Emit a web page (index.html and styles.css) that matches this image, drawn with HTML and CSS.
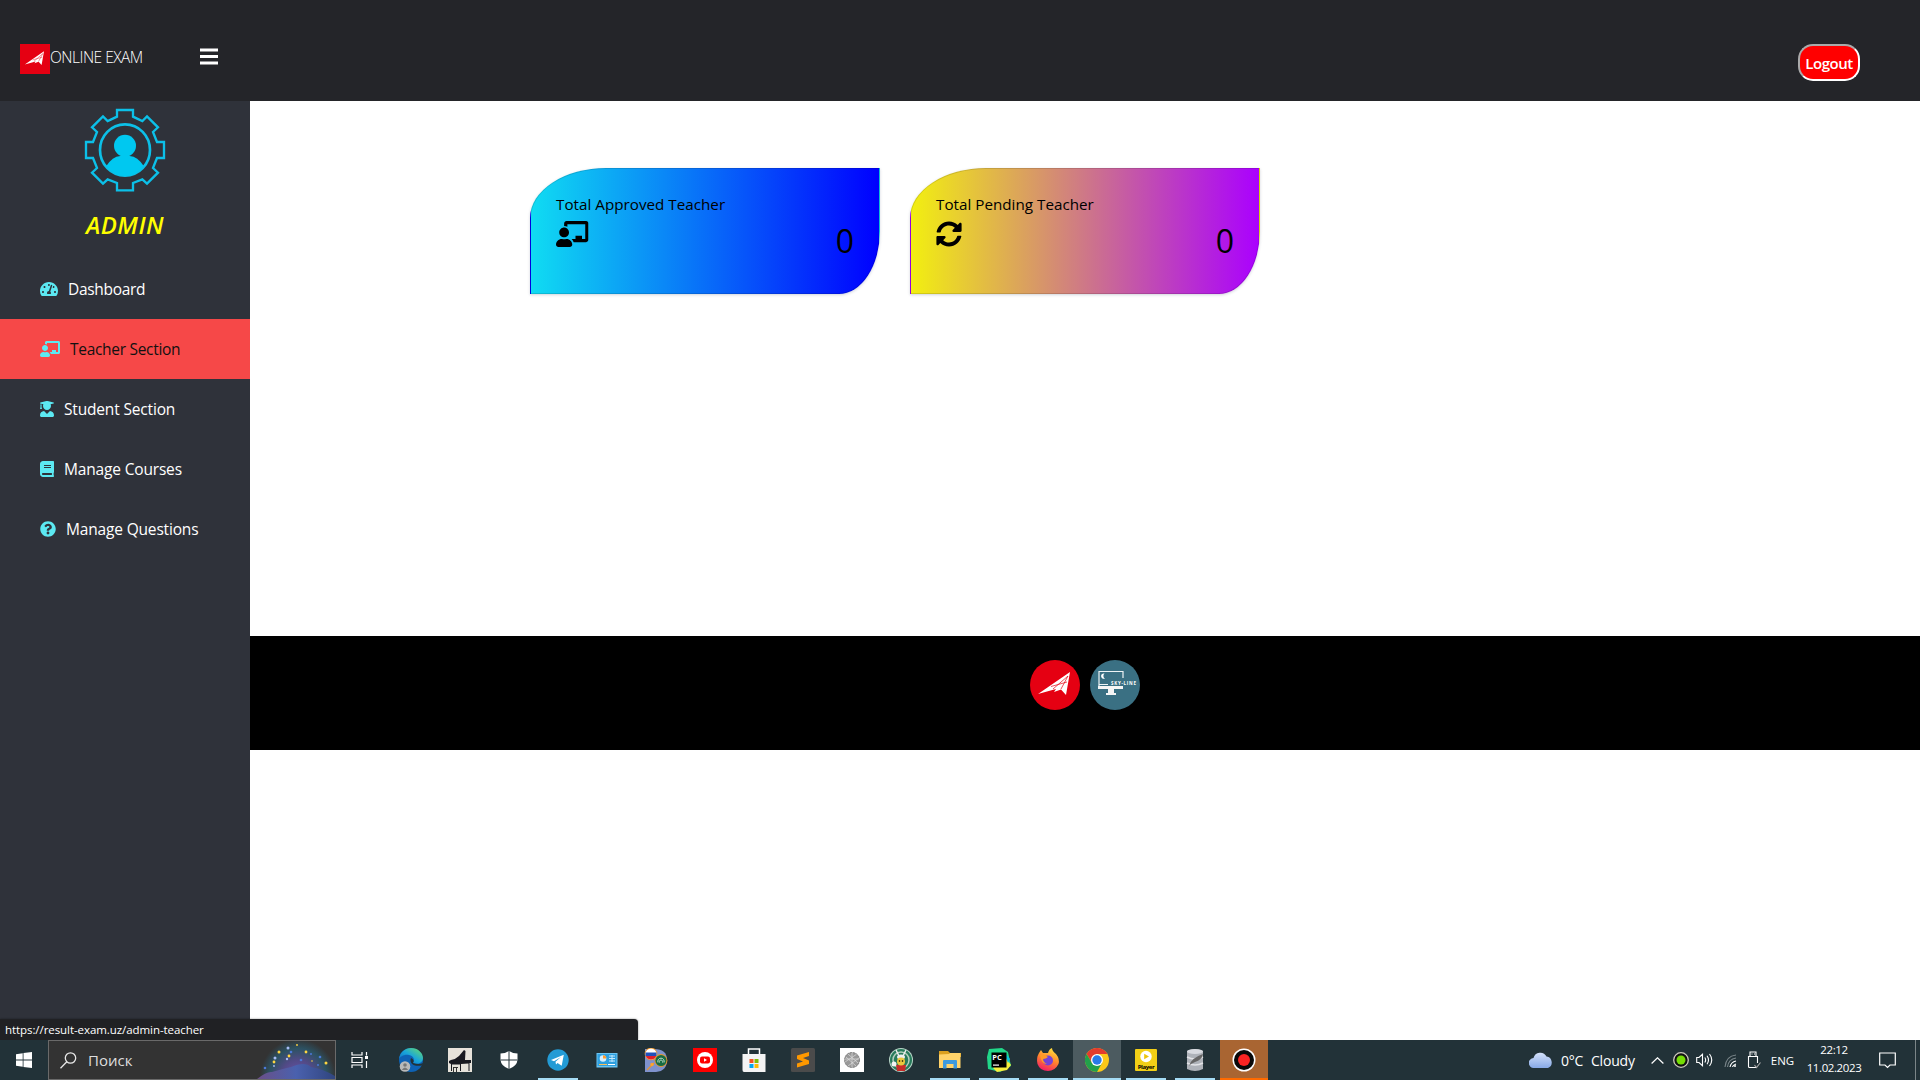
FILE: index.html
```
<!DOCTYPE html>
<html lang="en">
<head>
<meta charset="utf-8">
<title>Online Exam</title>
<link rel="stylesheet" href="styles.css">
</head>
<body>
<svg class="defs" aria-hidden="true">
  <symbol id="teacher" viewBox="0 0 640 512"><path d="M208 352c-2.39 0-4.78.35-7.06 1.09C187.98 357.3 174.35 360 160 360c-14.35 0-27.98-2.7-40.95-6.91-2.28-.74-4.66-1.09-7.05-1.09C49.94 352-.33 402.48 0 464.62.14 490.88 21.73 512 48 512h224c26.27 0 47.86-21.12 48-47.38.33-62.14-49.94-112.62-112-112.62zm-48-32c53.02 0 96-42.98 96-96s-42.98-96-96-96-96 42.98-96 96 42.98 96 96 96zM592 0H208c-26.47 0-48 22.25-48 49.59V96c23.42 0 45.1 6.78 64 17.8V64h352v288h-64v-64H384v64h-76.24c19.1 16.69 33.12 38.73 39.69 64H592c26.47 0 48-22.25 48-49.59V49.59C640 22.25 618.47 0 592 0z"/></symbol>
  <symbol id="plane" viewBox="0 0 50 50"><path fill="#fff" d="M8 34 40 12 36 35 31 29.500 24 32 26 29z"/><path d="M23 29 38 16 31 29M21 26.500 37 22" stroke="#e50012" stroke-width=".7" fill="none"/></symbol>
</svg>

<header class="topbar">
  <a class="brand"><svg class="brand-logo" viewBox="0 0 50 50"><use href="#plane"/></svg><span>ONLINE EXAM</span></a>
  <svg class="burger" viewBox="0 0 18 17"><path fill="#fff" d="M0 .6h18v3H0zM0 7h18v3H0zM0 13.4h18v3H0z"/></svg>
  <button class="logout">Logout</button>
</header>

<div class="page">
  <aside class="sidebar">
    <svg class="avatar" viewBox="252 324 246 252">
      <path fill="none" stroke="#0cc0e8" stroke-width="7" d="M351 330H399V350L427 363 441 349 474 382 459 396 471 426H492V474H471L459 504 474 518 441 551 427 538 399 549V571H351V549L323 538 309 551 276 518 291 504 279 474H258V426H279L291 396 276 382 309 349 323 363 351 350Z"/>
      <ellipse cx="375" cy="450" rx="75" ry="77" fill="none" stroke="#0cc0e8" stroke-width="8"/>
      <circle cx="375" cy="437" r="33" fill="#00c8f0"/>
      <path fill="#00c8f0" d="M319 498Q337 470 361 468H389Q413 470 431 498Q409 528 375 528T319 498Z"/>
    </svg>
    <h4 class="role">ADMIN</h4>
    <nav class="menu">
      <a class="item dash"><svg class="w18" viewBox="0 0 576 512"><path d="M288 32C128.94 32 0 160.94 0 320c0 52.8 14.25 102.26 39.06 144.8 5.61 9.62 16.3 15.2 27.44 15.2h443c11.14 0 21.83-5.58 27.44-15.2C561.75 422.26 576 372.8 576 320c0-159.06-128.94-288-288-288zm0 64c14.71 0 26.58 10.13 30.32 23.65-1.11 2.26-2.64 4.23-3.45 6.67l-9.22 27.67c-5.13 3.49-10.97 6.01-17.64 6.01-17.67 0-32-14.33-32-32S270.33 96 288 96zM96 384c-17.67 0-32-14.33-32-32s14.33-32 32-32 32 14.33 32 32-14.33 32-32 32zm48-160c-17.67 0-32-14.33-32-32s14.33-32 32-32 32 14.33 32 32-14.33 32-32 32zm246.77-72.41l-61.33 184C343.13 347.33 352 364.54 352 384c0 11.72-3.38 22.55-8.88 32H232.88c-5.5-9.45-8.88-20.28-8.88-32 0-33.94 26.5-61.43 59.9-63.59l61.34-184.01c4.17-12.56 17.73-19.45 30.36-15.17 12.57 4.19 19.35 17.79 15.17 30.36zm14.66 57.2l15.52-46.55c3.47-1.29 7.13-2.23 11.05-2.23 17.67 0 32 14.33 32 32s-14.33 32-32 32c-11.38-.01-20.89-6.28-26.57-15.22zM480 384c-17.67 0-32-14.33-32-32s14.33-32 32-32 32 14.33 32 32-14.33 32-32 32z"/></svg><span>Dashboard</span></a>
      <a class="item active"><svg class="w20"><use href="#teacher"/></svg><span>Teacher Section</span></a>
      <a class="item"><svg class="w14" viewBox="0 0 448 512"><path d="M319.4 320.6L224 416l-95.4-95.4C57.1 323.7 0 382.2 0 454.4v9.6c0 26.5 21.5 48 48 48h352c26.5 0 48-21.5 48-48v-9.6c0-72.2-57.1-130.7-128.6-133.8zM13.6 79.8l6.4 1.5v58.4c-7 4.2-12 11.5-12 20.3 0 8.4 4.6 15.4 11.1 19.7L3.5 242c-1.7 6.9 2.1 14 7.6 14h41.8c5.5 0 9.3-7.1 7.6-14l-15.6-62.3C51.4 175.4 56 168.4 56 160c0-8.8-5-16.1-12-20.3V87.1l66 15.9c-8.6 17.2-14 36.4-14 57 0 70.7 57.3 128 128 128s128-57.3 128-128c0-20.6-5.3-39.8-14-57l96.3-23.2c18.2-4.4 18.2-27.1 0-31.5l-190.4-46c-13-3.1-26.7-3.1-39.7 0L13.6 48.2c-18.1 4.4-18.1 27.2 0 31.6z"/></svg><span>Student Section</span></a>
      <a class="item"><svg class="w14" viewBox="0 0 448 512"><path d="M448 360V24c0-13.3-10.7-24-24-24H96C43 0 0 43 0 96v320c0 53 43 96 96 96h328c13.3 0 24-10.7 24-24v-16c0-7.5-3.5-14.3-8.9-18.7-4.2-15.4-4.2-59.3 0-74.7 5.4-4.3 8.9-11.1 8.9-18.6zM128 134c0-3.3 2.7-6 6-6h212c3.3 0 6 2.7 6 6v20c0 3.3-2.7 6-6 6H134c-3.3 0-6-2.7-6-6v-20zm0 64c0-3.3 2.7-6 6-6h212c3.3 0 6 2.7 6 6v20c0 3.3-2.7 6-6 6H134c-3.3 0-6-2.7-6-6v-20zm253.4 250H96c-17.7 0-32-14.3-32-32 0-17.6 14.4-32 32-32h285.4c-1.9 17.1-1.9 46.9 0 64z"/></svg><span>Manage Courses</span></a>
      <a class="item"><svg class="w16" viewBox="0 0 512 512"><path d="M504 256c0 136.997-111.043 248-248 248S8 392.997 8 256C8 119.083 119.043 8 256 8s248 111.083 248 248zM262.655 90c-54.497 0-89.255 22.957-116.549 63.758-3.536 5.286-2.353 12.415 2.715 16.258l34.699 26.31c5.205 3.947 12.621 3.008 16.665-2.122 17.864-22.658 30.113-35.797 57.303-35.797 20.429 0 45.698 13.148 45.698 32.958 0 14.976-12.363 22.667-32.534 33.976C247.128 238.528 216 254.941 216 296v4c0 6.627 5.373 12 12 12h56c6.627 0 12-5.373 12-12v-1.333c0-28.462 83.186-29.647 83.186-106.667 0-58.002-60.165-102-116.531-102zM256 338c-25.365 0-46 20.635-46 46 0 25.364 20.635 46 46 46s46-20.636 46-46c0-25.365-20.635-46-46-46z"/></svg><span>Manage Questions</span></a>
    </nav>
  </aside>

  <main class="content">
    <section class="cards">
      <article class="card approved">
        <h6>Total Approved Teacher</h6>
        <div class="card-row"><svg class="card-icon"><use href="#teacher"/></svg><span class="count">0</span></div>
      </article>
      <article class="card pending">
        <h6>Total Pending Teacher</h6>
        <div class="card-row"><svg class="card-icon sq" viewBox="0 0 512 512"><path d="M370.72 133.28C339.458 104.008 298.888 87.962 255.848 88c-77.458.068-144.328 53.178-162.791 126.85-1.344 5.363-6.122 9.15-11.651 9.15H24.103c-7.498 0-13.194-6.807-11.807-14.176C33.933 94.924 134.813 8 256 8c66.448 0 126.791 26.136 171.315 68.685L463.03 40.97C478.149 25.851 504 36.559 504 57.941V192c0 13.255-10.745 24-24 24H345.941c-21.382 0-32.09-25.851-16.971-40.971l41.75-41.749zM32 296h134.059c21.382 0 32.09 25.851 16.971 40.971l-41.75 41.75c31.262 29.273 71.835 45.319 114.876 45.28 77.418-.07 144.315-53.144 162.787-126.849 1.344-5.363 6.122-9.15 11.651-9.15h57.304c7.498 0 13.194 6.807 11.807 14.176C478.067 417.076 377.187 504 256 504c-66.448 0-126.791-26.136-171.315-68.685L48.97 471.03C33.851 486.149 8 475.441 8 454.059V320c0-13.255 10.745-24 24-24z"/></svg><span class="count">0</span></div>
      </article>
    </section>
    <footer class="footer">
      <svg class="social red" viewBox="0 0 50 50"><use href="#plane"/></svg>
      <svg class="social teal" viewBox="0 0 50 50">
        <path d="M9 26V11.500H33V18M9 22V24.500H18" fill="none" stroke="#eef4f6" stroke-width="1.200"/>
        <path d="M14.500 13.500A2.700 2.700 0 1 0 15 18.500A3 3 0 0 1 14.500 13.500Z" fill="#fff"/>
        <path d="M8 26H33V29H8zM18 29H24V33H26V35H16V33H18z" fill="#f5f5f5"/>
        <text x="21" y="25" class="sky" textLength="25">SKY-LINE</text>
      </svg>
    </footer>
  </main>
  <div class="status">https://result-exam.uz/admin-teacher</div>
</div>

<div class="taskbar">
  <div class="start"><svg width="16" height="16" viewBox="0 0 16 16"><path fill="#fff" d="M0 2.200 6.700 1.300V7.500H0zM7.500 1.100 16 0V7.500H7.500zM0 8.400H6.700V14.700L0 13.800zM7.500 8.400H16V16L7.500 14.900z"/></svg></div>
  <div class="search">
    <svg width="17" height="17" viewBox="0 0 17 17" fill="none" stroke="#e8e8e8" stroke-width="1.300"><circle cx="10.500" cy="6" r="5.200"/><path d="M6.800 9.800.5 16.200"/></svg>
    <span>Поиск</span>
    <svg class="galaxy" width="78" height="38" viewBox="0 0 78 38">
      <defs><radialGradient id="glow" gradientUnits="userSpaceOnUse" cx="41" cy="36" r="38"><stop offset="0" stop-color="#6c55b0"/><stop offset=".45" stop-color="#514a86"/><stop offset=".75" stop-color="#2c5263"/><stop offset="1" stop-color="#333"/></radialGradient>
      <linearGradient id="hill" x1="0" x2="1"><stop offset="0" stop-color="#6a4f87"/><stop offset=".5" stop-color="#4a61ae"/><stop offset="1" stop-color="#30457f"/></linearGradient></defs>
      <path fill="url(#glow)" d="M0 0H78V38H0z"/>
      <path fill="url(#hill)" d="M0 38Q10 30 15 31 25 28 34 26 48 20 54 26 66 28 78 35V38z"/>
      <g fill="#ffd640"><circle cx="22" cy="11" r="1.500"/><circle cx="32" cy="15" r="1.400"/><circle cx="49" cy="11" r="1.400"/><circle cx="17" cy="21" r="1.400"/><circle cx="69" cy="22" r="1.500"/><circle cx="40" cy="4" r=".9"/><circle cx="55" cy="20" r=".8"/></g>
      <g fill="#a9bdf5"><circle cx="31" cy="7" r="1.500"/><circle cx="18" cy="17" r="1.500"/><circle cx="30" cy="18" r="1.200"/><circle cx="17" cy="25" r=".9"/></g>
      <g fill="#4b79d8"><circle cx="8" cy="27" r="1.300"/><circle cx="34" cy="11" r="1.300"/><circle cx="44" cy="19" r="1.300"/><circle cx="63" cy="16" r="1.300"/><circle cx="54" cy="13" r="1"/><circle cx="61" cy="24" r="1"/></g>
    </svg>
  </div>
  <div class="cell taskview"><svg viewBox="0 0 24 24" fill="none" stroke="#fff" stroke-width="1.200"><path d="M4 4V7H14V4M4 20V17H14V20M4 9.500H14V14.500H4zM18.500 4V7.500M18.500 13V20"/><path fill="#fff" stroke="none" d="M17 8h3v3h-3z"/></svg></div>
  <div class="apps">
    <div class="cell"><svg viewBox="0 0 24 24"><defs><linearGradient id="edge" x1="0" y1="1" x2="1" y2="0"><stop offset="0" stop-color="#0c62bd"/><stop offset=".5" stop-color="#19a5da"/><stop offset="1" stop-color="#6ce066"/></linearGradient></defs><circle cx="12" cy="12" r="12" fill="#0e62b5"/><path fill="url(#edge)" d="M0 11C1 4 6 0 12 0 19 0 24 5 24 10 24 15 18 17 14 15 16 12 15 8 10 7 5 6 1 9 0 11Z"/><path fill="#223238" d="M12 10C10 15 14 19 23 17.500L24 15Q20 17 14 15 16 12 12 10Z"/><circle cx="6" cy="18.500" r="5.300" fill="#b9b9b9"/><circle cx="6" cy="17" r="1.800" fill="#777"/><path d="M2.800 22Q6 17 9.200 22z" fill="#777"/></svg></div>
    <div class="cell"><svg viewBox="0 0 24 24"><path fill="#e6e2da" d="M0 0h24v24H0z"/><path fill="#191920" d="M3 12Q8 11 11 8L16 2 17.500 3 17 12H23V15H21.500V23H20.500V15.500L13 16V23H12V16.500L4 16.500V23H3V16L1 15V13z"/><path fill="#333" d="M5 19h5v1H9v4H8v-4H6v4H5z"/></svg></div>
    <div class="cell"><svg viewBox="0 0 24 24"><path fill="#fff" d="M12 3Q16 5.500 20.500 5.500V12Q20 18 12 21Q4 18 3.500 12V5.500Q8 5.500 12 3Z"/><path d="M12 3V21M3.500 12H20.500" stroke="#223238" stroke-width="1"/></svg></div>
    <div class="cell run"><svg viewBox="0 0 24 24"><circle cx="12" cy="12" r="10.700" fill="#239bd5"/><path fill="#fff" d="M5 12 17.800 6.700 15.700 17.800 11.500 15 10 16.500 9.500 13.800 15 9 8 13.200z"/></svg></div>
    <div class="cell"><svg viewBox="0 0 24 24"><rect x="1.500" y="5" width="21" height="14.500" fill="#6cc5f2"/><path fill="#2d9fdf" d="M2.500 6h19v12h-19z"/><circle cx="8" cy="10.500" r="3.300" fill="#d5efff"/><path d="M8 10.500V7.200A3.300 3.300 0 0 1 11.300 10.500z" fill="#ff9a2e"/><path d="M14 8h6M14 10.500h6M14 13h6M17 7v7" stroke="#c5eaff"/><path d="M4 16.500h8" stroke="#ffbf55"/><path d="M13 16.500h7" stroke="#fff"/></svg></div>
    <div class="cell"><svg viewBox="0 0 24 24"><path fill="#7f92cd" d="M1 1H10Q23 1 23 12T12 24H1z"/><circle cx="7" cy="6" r="6.300" fill="#e9942b"/><circle cx="7" cy="6" r="5.500" fill="#fff"/><path fill="#2050bb" d="M1.500 4.500h11v3.500h-11z"/><path fill="#e01e2b" d="M1.700 8h10.600Q10.500 11.500 7 11.500 3.500 11.500 1.700 8z"/><circle cx="17" cy="12.500" r="6.400" fill="#e9942b"/><circle cx="17" cy="12.500" r="5.500" fill="#176b45"/><path d="M14 14.500A3.200 3.200 0 1 1 20 14.500M15.500 14.500A1.700 1.700 0 1 1 18.500 14.500" fill="none" stroke="#cfe5d5" stroke-width=".9"/><path d="M3 22 10 15" stroke="#e9942b" stroke-width="1.300"/><circle cx="8" cy="16.500" r="1.700" fill="#ffa42c"/></svg></div>
    <div class="cell"><svg viewBox="0 0 24 24"><path fill="#f00" d="M0 0h24v24H0z"/><circle cx="12" cy="12" r="8" fill="#fff"/><rect x="7" y="8.500" width="10" height="7" rx="2" fill="#f00"/><path fill="#fff" d="M11 10.300v3.400l3-1.700z"/></svg></div>
    <div class="cell"><svg viewBox="0 0 24 24"><path fill="none" stroke="#fff" stroke-width="1.500" d="M6.500 7V1H17.500V7"/><path fill="#f4f4f4" d="M.5 6h23v18H2Q.5 24 .5 22z"/><path fill="#f35325" d="M7.500 11h4v4h-4z"/><path fill="#81bc06" d="M12.500 11h4v4h-4z"/><path fill="#05a6f0" d="M7.500 16h4v4h-4z"/><path fill="#ffba08" d="M12.500 16h4v4h-4z"/></svg></div>
    <div class="cell"><svg viewBox="0 0 24 24"><rect width="24" height="24" rx="1.500" fill="#4b4b4b"/><path fill="#ff9800" d="M6 7.500 18 4V8L12 10 18 12.500V16L6 19.500V15.500L12 13.500 6 11z"/></svg></div>
    <div class="cell"><svg viewBox="0 0 24 24"><path fill="#fff" d="M0 0h24v24H0z"/><circle cx="12" cy="12" r="7.700" fill="#999"/><path d="M6 9l10 9M8 6l10 9M12 4v16M5 14l12-8M8 18l11-8M4 11h16" stroke="#dedede" stroke-width=".7"/><circle cx="12" cy="12" r="7.500" fill="none" stroke="#777" stroke-width=".8" stroke-dasharray="2 1"/></svg></div>
    <div class="cell"><svg viewBox="0 0 24 24"><circle cx="12" cy="12" r="12" fill="#b8d6c8"/><circle cx="12" cy="12" r="11" fill="#287b5b"/><circle cx="12" cy="12" r="8" fill="none" stroke="#b5cfbf" stroke-width="1.500"/><path d="M7 2 10 8M17 2 14 8" stroke="#eee" stroke-width="1.500"/><ellipse cx="12" cy="9" rx="4" ry="2.500" fill="#eee"/><path fill="#c62c29" d="M7 17h10l-1 6H8z"/><circle cx="12" cy="13.500" r="4" fill="#eac83d"/><circle cx="10.500" cy="13" r=".8"/><circle cx="13.500" cy="13" r=".8"/><circle cx="5" cy="16" r="2.500" fill="#f4f4f4"/></svg></div>
    <div class="cell run"><svg viewBox="0 0 24 24"><path fill="#dba01f" d="M1 3h9l2 2h11v4H1z"/><path fill="#ffd36a" d="M1 6.500 11 6 12 5H22.500V20H1z"/><path fill="#3c9ade" d="M5 20.500V13Q5 12 6 12H18Q19 12 19 13V20.500H15.500V16H8.500V20.500z"/></svg></div>
    <div class="cell run"><svg viewBox="0 0 24 24"><path fill="#21d789" d="M2 1 15 0 21 4 24 18 13 24 1 21 0 9z"/><path fill="#f6ed3b" d="M19 10 24 17 20 22 10 24 6 20z"/><path fill="#0bc2e0" d="M17 4 23 11 21 15z"/><path d="M4.500 4.500h15v15h-15z"/><text x="5.300" y="12" class="pc">PC</text><path fill="#fff" d="M6 16.500h6v1.200H6z"/></svg></div>
    <div class="cell run"><svg viewBox="0 0 24 24"><defs><linearGradient id="ff" x1=".7" y1="0" x2=".3" y2="1"><stop offset="0" stop-color="#ffe13c"/><stop offset=".5" stop-color="#ff832d"/><stop offset="1" stop-color="#f3186a"/></linearGradient></defs><path fill="url(#ff)" d="M3 5 5 2 7 5 12 5Q13 1 16 0 16 3 20 6 24 11 22.500 16 19 23 12 23 4 23 1.500 16 0 10 3 5z"/><circle cx="12" cy="12.500" r="5" fill="#7542d6"/><path fill="#ff9a25" d="M4 7Q9 6 12 9 10 11 7 11 7 14 11 16 5 16 4 7z"/></svg></div>
    <div class="cell run current"><svg viewBox="0 0 24 24"><circle cx="12" cy="12" r="12" fill="#fbc818"/><path fill="#e33b2e" d="M1.600 6A12 12 0 0 1 22.400 6H12L7 15z"/><path fill="#22a04b" d="M1.600 6A12 12 0 0 0 12 24L17 15 7 15z"/><circle cx="12" cy="12" r="6" fill="#fff"/><circle cx="12" cy="12" r="4.700" fill="#287ae8"/></svg></div>
    <div class="cell run"><svg viewBox="0 0 24 24"><rect x="1" y="1" width="22" height="22" rx="1" fill="#f2cf16"/><circle cx="12" cy="8.500" r="5.700" fill="#fff"/><path fill="#edc50b" d="M10.200 5.800v5.400L15 8.500z"/><text x="3.700" y="21" class="player" textLength="17">Player</text></svg></div>
    <div class="cell run"><svg viewBox="0 0 24 24"><path fill="#aeb2b9" d="M4 3Q12-1 20 3V21Q12 25 4 21z"/><ellipse cx="12" cy="3.500" rx="8" ry="2.500" fill="#d8dae0"/><path d="M4 9Q12 13 20 9M4 15Q12 19 20 15" fill="none" stroke="#e2e3e7" stroke-width="1.500"/><path fill="#666" d="M6 18Q8 10 20 6 19 12 12 14L8 16z"/></svg></div>
    <div class="cell record"><svg viewBox="0 0 24 24"><circle cx="12" cy="12" r="11.500" fill="#fff"/><circle cx="12" cy="12" r="10" fill="#090909"/><circle cx="12" cy="12" r="6" fill="#fa2323"/></svg></div>
  </div>
  <div class="tray">
    <div class="weather"><svg width="24" height="16" viewBox="0 0 24 16"><defs><linearGradient id="cloud" x2="0" y2="1"><stop offset="0" stop-color="#d4e1fa"/><stop offset="1" stop-color="#87a9e6"/></linearGradient></defs><path fill="url(#cloud)" d="M5 16A5 5 0 0 1 4.500 6 7 7 0 0 1 17.500 4.500 6 6 0 0 1 19 16z"/></svg><span class="temp">0°C</span><span class="sky-state">Cloudy</span></div>
    <div class="t24"><svg width="13" height="7" viewBox="0 0 13 7"><path d="M.6 6.500 6.500.8 12.400 6.500" fill="none" stroke="#fff" stroke-width="1.200"/></svg></div>
    <div class="t24"><svg width="16" height="16" viewBox="0 0 16 16"><circle cx="8" cy="8" r="7.300" fill="#111" stroke="#cfcabf" stroke-width="1.300"/><circle cx="8" cy="8" r="4.500" fill="#75dd05"/></svg></div>
    <div class="t24"><svg width="18" height="14" viewBox="0 0 18 14" fill="none" stroke="#fff" stroke-width="1.100"><path d="M.7 4.500H3L6.500 1.300V12.700L3 9.500H.7zM8.800 4.500Q10.500 7 8.800 9.500M11 2.800Q14 7 11 11.200M13.500 1Q18 7 13.500 13"/></svg></div>
    <div class="t24 wifi"><svg width="13" height="13" viewBox="0 0 13 13" fill="none" stroke="#aab4b7" stroke-width="1.100"><path d="M1 13Q2 2 12 1M3.500 13Q4.500 5 12 4" opacity=".65"/><path d="M6 13Q7 8 12 7M8.500 13Q9 11 12 10" stroke="#fff"/><circle cx="11" cy="12" r="1" fill="#fff" stroke="none"/></svg></div>
    <div class="t24"><svg width="14" height="18" viewBox="0 0 14 18" fill="none" stroke="#fff" stroke-width="1.100"><path d="M3 5.500V1H9V5.500M9 16.500H2.500Q1.500 16.500 1.500 15.500V5.500H10.500V12M4.500 3H5.500M7 3H8"/><path d="M7.500 14 9.500 16.500 13.500 11.500" stroke="#aaa"/></svg></div>
    <div class="lang">ENG</div>
    <div class="clock"><span class="time">22:12</span><span class="date">11.02.2023</span></div>
    <div class="note"><svg width="17" height="17" viewBox="0 0 17 17"><path d="M.7 1H16.300V13H11L8.500 15.500 6 13H.7z" fill="none" stroke="#fff" stroke-width="1.200"/></svg></div>
    <div class="peek"></div>
  </div>
</div>
</body>
</html>
```
FILE: styles.css
```
* { box-sizing: border-box; }
body {
  margin: 0;
  width: 1920px;
  height: 1080px;
  overflow: hidden;
  display: flex;
  flex-direction: column;
  background: #fff;
  font-family: "Open Sans", "Noto Sans", sans-serif;
  font-size: 15px;
}
svg { display: block; flex: none; }
.defs { display: none; }

.topbar {
  flex: 0 0 101px;
  background: #242529;
  display: flex;
  align-items: flex-start;
  padding: 44px 60px 0 20px;
}
.brand {
  display: flex;
  width: 180px;
  height: 30px;
  color: #fff;
  font-size: 15.5px;
  font-weight: 300;
  line-height: 27px;
  letter-spacing: -0.5px;
}
.brand-logo { width: 30px; height: 30px; background: #e50012; }
.burger { width: 18px; height: 17px; margin-top: 4px; }
.logout {
  margin-left: auto;
  width: 62px;
  height: 37px;
  padding: 0;
  border: 2px solid;
  border-color: #aaa #fff #fff #aaa;
  border-radius: 15px;
  background: red;
  color: #fff;
  font: 600 15px "Open Sans", sans-serif;
  letter-spacing: -0.45px;
}

.page { flex: 1; display: flex; position: relative; }
.sidebar { width: 250px; background: #2f323a; padding-top: 7px; }
.avatar { width: 82px; height: 84px; margin: 0 auto; }
.role {
  margin: 16px 0 17px;
  height: 34px;
  line-height: 34px;
  text-align: center;
  font-size: 24px;
  font-weight: 650;
  font-style: italic;
  letter-spacing: .5px;
  color: #ff0;
}
.menu { display: flex; flex-direction: column; }
.item {
  height: 60px;
  padding-left: 40px;
  display: flex;
  align-items: center;
  gap: 10px;
  color: #fff;
  font-size: 15.5px;
  letter-spacing: -0.17px;
}
.item svg { fill: #5ce9f2; height: 16px; }
.w14 { width: 14px; }
.w16 { width: 16px; }
.w18 { width: 18px; }
.w20 { width: 20px; }
.item.active { background: #f64848; color: #111; letter-spacing: -0.3px; }
.item.dash { letter-spacing: -0.3px; }

.content { flex: 1; display: flex; flex-direction: column; }
.cards { display: flex; gap: 30px; height: 535px; padding: 67px 0 0 280px; }
.card {
  width: 350px;
  height: 126px;
  padding: 22px 26px 0 25px;
  border: 1px solid rgba(0, 0, 0, .125);
  border-radius: 76px 0 41px 0 / 50px 0 63px 0;
  box-shadow: 0 1px 3px rgba(40, 60, 90, .22);
}
.approved { background: linear-gradient(to right, #10dcf2, #0000ff); }
.pending { background: linear-gradient(to right, #f2ef10, #aa00ff); }
.card h6 { margin: 0; font-size: 15.2px; font-weight: 500; line-height: 26px; letter-spacing: .02px; color: #000; }
.card-row { display: flex; justify-content: space-between; margin-top: 4px; }
.card-icon { width: 32.500px; height: 26px; }
.card-icon.sq { width: 26px; }
.count { font-size: 32px; font-weight: 500; line-height: 40px; letter-spacing: -1px; }

.footer { height: 114px; background: #000; display: flex; justify-content: center; gap: 10px; padding-top: 24px; }
.social { width: 50px; height: 50px; border-radius: 50%; }
.red { background: #e50012; }
.teal { background: #3a7083; }
.sky { font: 700 4.500px "Open Sans", sans-serif; fill: #fff; }

/* link preview bubble over the bottom of the page */
.status {
  position: absolute;
  left: 0;
  bottom: 0;
  width: 638px;
  height: 21px;
  padding-left: 5px;
  border-top-right-radius: 4px;
  background: #202124;
  color: #fff;
  font-size: 11.500px;
  letter-spacing: -.07px;
  line-height: 22px;
  box-shadow: 0 0 2px rgba(0, 0, 0, .5);
}

.taskbar { flex: 0 0 40px; position: relative; background: #223238; display: flex; color: #fff; }
.start { width: 48px; display: flex; align-items: center; justify-content: center; }
.search {
  width: 288px;
  border: 1px solid #6a6a6a;
  background: #333;
  display: flex;
  align-items: center;
  padding-left: 11px;
  color: #ddd;
}
.search span { margin-left: 11px; }
.galaxy { margin-left: auto; }
.cell { width: 48px; display: flex; align-items: center; justify-content: center; border-bottom: 2px solid transparent; padding-top: 2px; }
.cell svg { width: 24px; height: 24px; }
.taskview { margin-right: 3px; }
.apps { display: flex; gap: 1px; }
.run {
  background: linear-gradient(#a5dcf5, #a5dcf5) center bottom / 40px 2px no-repeat border-box;
}
.run.current { background: #4c5b60; border-bottom-color: #a5dcf5; }
.record { background: #a96532; border-bottom-color: #ff6a00; }
.pc { font: 700 7.500px "Open Sans", sans-serif; fill: #fff; }
.player { font: 700 6px "Open Sans", sans-serif; }

.tray { margin-left: auto; display: flex; align-items: center; }
.weather { display: flex; align-items: center; width: 116px; font-size: 14px; letter-spacing: -.2px; }
.temp { margin-left: 8px; width: 30px; }
.t24 { width: 24px; display: flex; justify-content: center; }
.wifi { margin-left: 1px; }
.lang { width: 33px; text-align: center; font-size: 11.500px; }
.clock { width: 70px; display: flex; flex-direction: column; align-items: center; font-size: 11.500px; line-height: 18px; letter-spacing: -.4px; position: relative; top: -1px; }
.note { width: 36px; display: flex; justify-content: center; }
.peek { width: 5px; height: 40px; margin-left: 10px; border-left: 1px solid #7b8588; }
```
